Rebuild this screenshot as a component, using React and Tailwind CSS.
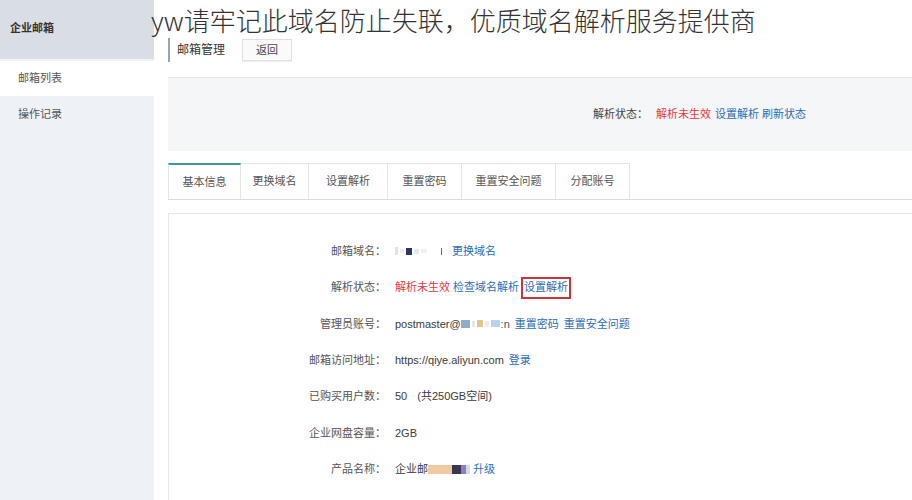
import React from "react";

const F = { fontFamily: '"Liberation Sans", "Noto Sans CJK SC", sans-serif' };
const T = { fontFamily: '"Noto Sans CJK SC", "Noto Sans", sans-serif' };

function Row({ label, children }) {
  return (
    <div className="flex items-center h-[36.35px] text-[11px]">
      <div className="w-[217px] text-right text-[#555] shrink-0">{label}</div>
      <div className="pl-[9px] flex items-center text-[#3a3a3a] whitespace-nowrap">{children}</div>
    </div>
  );
}

const A = ({ children, className = "" }) => (
  <span className={"text-[#2d6db5] " + className}>{children}</span>
);

export default function App() {
  const tabs = [
    ["基本信息", "w-[73px]"],
    ["更换域名", "w-[68px]"],
    ["设置解析", "w-[79px]"],
    ["重置密码", "w-[74px]"],
    ["重置安全问题", "w-[94px]"],
    ["分配账号", "w-[74px]"],
  ];
  return (
    <div className="relative w-[912px] h-[500px] overflow-hidden bg-white flex" style={F}>
      {/* sidebar */}
      <div className="w-[154px] h-full bg-[#eef1f5] flex flex-col shrink-0">
        <div className="h-[59px] bg-[#d9dee5] flex items-center pl-[10px] pb-[3px] text-[11px] font-bold text-[#333]">
          企业邮箱
        </div>
        <div className="h-[2px]" />
        <div className="h-[35px] bg-white flex items-center pl-[18px] text-[11px] text-[#555]">邮箱列表</div>
        <div className="h-[36px] flex items-center pl-[18px] text-[11px] text-[#555]">操作记录</div>
      </div>

      {/* main */}
      <div className="flex-1 pl-[14px] flex flex-col">
        <div className="h-[78px] border-b border-[#e3e5e8] pt-[38px]">
          <div className="flex items-center h-[24px]">
            <div className="h-[24px] border-l-2 border-[#8fa6bd] pl-[7px] flex items-center text-[12px] text-[#333]">
              邮箱管理
            </div>
            <div className="ml-[17px] w-[50px] h-[22px] border border-[#e1e1e1] bg-[#fafafa] flex items-center justify-center text-[11px] text-[#444] shadow-[0_1px_1px_rgba(0,0,0,0.06)]">
              返回
            </div>
          </div>
        </div>

        <div className="h-[73px] bg-[#f5f6f8] flex items-center justify-end pr-[106px] text-[11px]">
          <span className="text-[#444]">解析状态：</span>
          <span className="ml-[8px] text-[#e4393c]">解析未生效</span>
          <A className="ml-[4px]">设置解析</A>
          <A className="ml-[3px]">刷新状态</A>
        </div>

        <div className="h-[12px]" />

        <div className="h-[37px] flex border-b border-[#dcdcdc]">
          {tabs.map(([t, w], i) => (
            <div
              key={t}
              className={
                w +
                " h-full flex items-center justify-center text-[11px] text-[#555] border-r border-[#e4e4e4] " +
                (i === 0
                  ? "border-t-2 border-t-[#3c9a9a] border-l bg-white -mb-px"
                  : "border-t border-t-[#e6e6e6] bg-white")
              }
            >
              {t}
            </div>
          ))}
        </div>

        <div className="h-[13px]" />

        <div className="flex-1 border-t border-l border-[#e8e8e8] pt-[19px]">
          <Row label="邮箱域名：">
            <span className="inline-flex items-center w-[52px] h-[12px] gap-[2px] blur-[0.6px]">
              <span className="w-[3px] h-[8px] bg-[#dfe2ea]" />
              <span className="w-[4px] h-[4px] bg-[#eceef4]" />
              <span className="w-[6px] h-[7px] bg-[#2f3566]" />
              <span className="w-[5px] h-[5px] bg-[#e6e8ef]" />
              <span className="w-[6px] h-[4px] bg-[#f0f1f5]" />
              <span className="w-[10px]" />
              <span className="w-[1px] h-[7px] bg-[#666]" />
            </span>
            <A className="ml-[5px]">更换域名</A>
          </Row>
          <Row label="解析状态：">
            <span className="text-[#e4393c]">解析未生效</span>
            <A className="ml-[3px]">检查域名解析</A>
            <span className="ml-[2px] border-2 border-[#c8343a] px-[1px] h-[22px] flex items-center">
              <A>设置解析</A>
            </span>
          </Row>
          <Row label="管理员账号：">
            <span>postmaster@</span>
            <span className="inline-flex items-center w-[40px] h-[12px] gap-[2px] blur-[0.6px]">
              <span className="w-[9px] h-[8px] bg-[#8fa9c9]" />
              <span className="w-[3px] h-[6px] bg-[#e2e8f0]" />
              <span className="w-[6px] h-[7px] bg-[#e7c48a]" />
              <span className="w-[4px] h-[6px] bg-[#e8edf3]" />
              <span className="w-[9px] h-[7px] bg-[#b9d3ea]" />
            </span>
            <span className="text-[#555]">:n</span>
            <A className="ml-[5px]">重置密码</A>
            <A className="ml-[5px]">重置安全问题</A>
          </Row>
          <Row label="邮箱访问地址：">
            <span>https://qiye.aliyun.com</span>
            <A className="ml-[5px]">登录</A>
          </Row>
          <Row label="已购买用户数：">
            <span>50</span>
            <span className="ml-[10px]">(共250GB空间)</span>
          </Row>
          <Row label="企业网盘容量：">
            <span>2GB</span>
          </Row>
          <Row label="产品名称：">
            <span>企业邮</span>
            <span className="inline-flex items-center h-[12px] blur-[0.6px]">
              <span className="w-[24px] h-[9px] bg-[#efc9a0]" />
              <span className="w-[9px] h-[9px] bg-[#3a3550]" />
              <span className="w-[5px] h-[9px] bg-[#8a7fb8]" />
              <span className="w-[4px] h-[9px] bg-[#d9d9e4]" />
            </span>
            <A className="ml-[3px]">升级</A>
          </Row>
        </div>
      </div>

      {/* overlay title */}
      <div className="absolute left-[151px] top-[6px] text-[26px] leading-[28px] text-[#333] whitespace-nowrap font-light" style={T}>
        yw请牢记此域名防止失联，优质域名解析服务提供商
      </div>
    </div>
  );
}
